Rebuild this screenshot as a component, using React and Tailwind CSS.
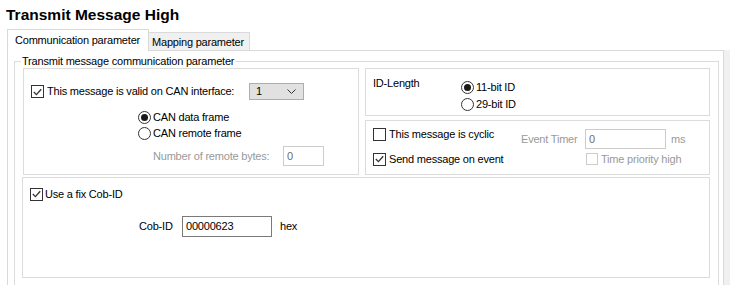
import React from "react";

function Check({ checked, disabled }) {
  return (
    <span
      className={
        disabled
          ? "w-[12px] h-[12px] border border-[#cccccc] bg-white flex items-center justify-center shrink-0"
          : "w-[13px] h-[13px] border border-[#333333] bg-white flex items-center justify-center shrink-0"
      }
    >
      {checked && (
        <svg width="9" height="8" viewBox="0 0 9 8">
          <path d="M0.8 4 L3.4 6.6 L8.2 1.2" stroke="#333333" strokeWidth="1.3" fill="none" />
        </svg>
      )}
    </span>
  );
}

function Radio({ checked }) {
  return (
    <span className="w-[13px] h-[13px] rounded-full border border-[#333333] bg-white flex items-center justify-center shrink-0">
      {checked && <span className="w-[7px] h-[7px] rounded-full bg-[#1a1a1a]" />}
    </span>
  );
}

export default function App() {
  return (
    <div className="w-[730px] h-[285px] overflow-hidden bg-white text-black text-[11px] tracking-[-0.2px] font-['Liberation_Sans',Arial,sans-serif]">
      <div className="pl-[6px] pt-[6px] h-[29px] text-[15.5px] tracking-normal font-bold leading-[18px]">
        Transmit Message High
      </div>
      <div className="flex items-end h-[21px] pl-[7px]">
        <div className="relative z-10 -mb-px h-[22px] w-[142px] border-l border-t border-r border-[#d9d9d9] bg-white pl-[7px] pt-[3px] leading-[14px]">
          Communication parameter
        </div>
        <div className="h-[18px] w-[101px] border-t border-r border-[#d9d9d9] bg-[#f0f0f0] pl-[3px] pt-[2px] leading-[14px]">
          Mapping parameter
        </div>
      </div>
      <div className="flex">
        <div className="ml-[7px] w-[717px] h-[260px] border border-[#d9d9d9]">
          <fieldset className="mt-[3px] ml-[6px] mr-[4px] border border-[#dcdcdc] px-[8px] pb-[20px]">
            <legend className="-ml-[2px] px-[1px] leading-[14px]">Transmit message communication parameter</legend>
            <div className="flex gap-[6px]">
              <div className="w-[336px] h-[107px] border border-[#dcdcdc] pl-[7px] pt-[14px]">
                <div className="flex items-center h-[17px]">
                  <div className="w-[218px] flex items-center gap-[3px]">
                    <Check checked />
                    <span>This message is valid on CAN interface:</span>
                  </div>
                  <div className="w-[55px] h-[17px] bg-[#e1e1e1] border border-[#adadad] flex items-center pl-[6px]">
                    <span>1</span>
                    <svg className="ml-auto mr-[7px]" width="9" height="5" viewBox="0 0 9 5">
                      <path d="M0.5 0.5 L4.5 4.5 L8.5 0.5" stroke="#333333" strokeWidth="1" fill="none" />
                    </svg>
                  </div>
                </div>
                <div className="ml-[107px] mt-[9px] flex flex-col">
                  <div className="h-[16px] flex items-center gap-[2px]">
                    <Radio checked />
                    <span>CAN data frame</span>
                  </div>
                  <div className="h-[16px] flex items-center gap-[2px]">
                    <Radio />
                    <span>CAN remote frame</span>
                  </div>
                </div>
                <div className="ml-[122px] mt-[5px] h-[20px] flex items-center">
                  <span className="w-[130px] text-[#999999]">Number of remote bytes:</span>
                  <div className="w-[41px] h-[20px] border border-[#cccccc] pl-[3px] flex items-center text-[#6d6d6d]">0</div>
                </div>
              </div>
              <div className="w-[345px] flex flex-col gap-[4px]">
                <div className="h-[48px] border border-[#dcdcdc] flex pl-[7px]">
                  <div className="w-[88px] pt-[6px] leading-[16px]">ID-Length</div>
                  <div className="pt-[10px] flex flex-col">
                    <div className="h-[17px] flex items-center gap-[2px]">
                      <Radio checked />
                      <span>11-bit ID</span>
                    </div>
                    <div className="h-[17px] flex items-center gap-[2px]">
                      <Radio />
                      <span>29-bit ID</span>
                    </div>
                  </div>
                </div>
                <div className="h-[55px] border border-[#dcdcdc] flex pl-[7px]">
                  <div className="w-[148px] pt-[5px] flex flex-col gap-[9px]">
                    <div className="h-[16px] flex items-center gap-[3px]">
                      <Check />
                      <span>This message is cyclic</span>
                    </div>
                    <div className="h-[16px] flex items-center gap-[3px]">
                      <Check checked />
                      <span>Send message on event</span>
                    </div>
                  </div>
                  <div className="pt-[8px]">
                    <div className="h-[20px] flex items-center">
                      <span className="w-[64px] text-[#999999]">Event Timer</span>
                      <div className="w-[81px] h-[20px] border border-[#cccccc] pl-[3px] flex items-center text-[#6d6d6d]">0</div>
                      <span className="ml-[5px] text-[#999999]">ms</span>
                    </div>
                    <div className="mt-[2px] h-[16px] flex items-center gap-[3px] pl-[65px]">
                      <Check disabled />
                      <span className="text-[#999999]">Time priority high</span>
                    </div>
                  </div>
                </div>
              </div>
            </div>
            <div className="mt-[2px] -ml-px w-[688px] h-[101px] border border-[#dcdcdc] pl-[7px] pt-[8px]">
              <div className="h-[16px] flex items-center gap-[2px]">
                <Check checked />
                <span>Use a fix Cob-ID</span>
              </div>
              <div className="mt-[14px] ml-[109px] h-[21px] flex items-center">
                <span className="w-[43px]">Cob-ID</span>
                <div className="w-[90px] h-[21px] border border-[#7a7a7a] pl-[3px] flex items-center">00000623</div>
                <span className="ml-[8px]">hex</span>
              </div>
            </div>
          </fieldset>
        </div>
        <div className="w-[6px] h-[260px] bg-[#f0f0f0]" />
      </div>
    </div>
  );
}
